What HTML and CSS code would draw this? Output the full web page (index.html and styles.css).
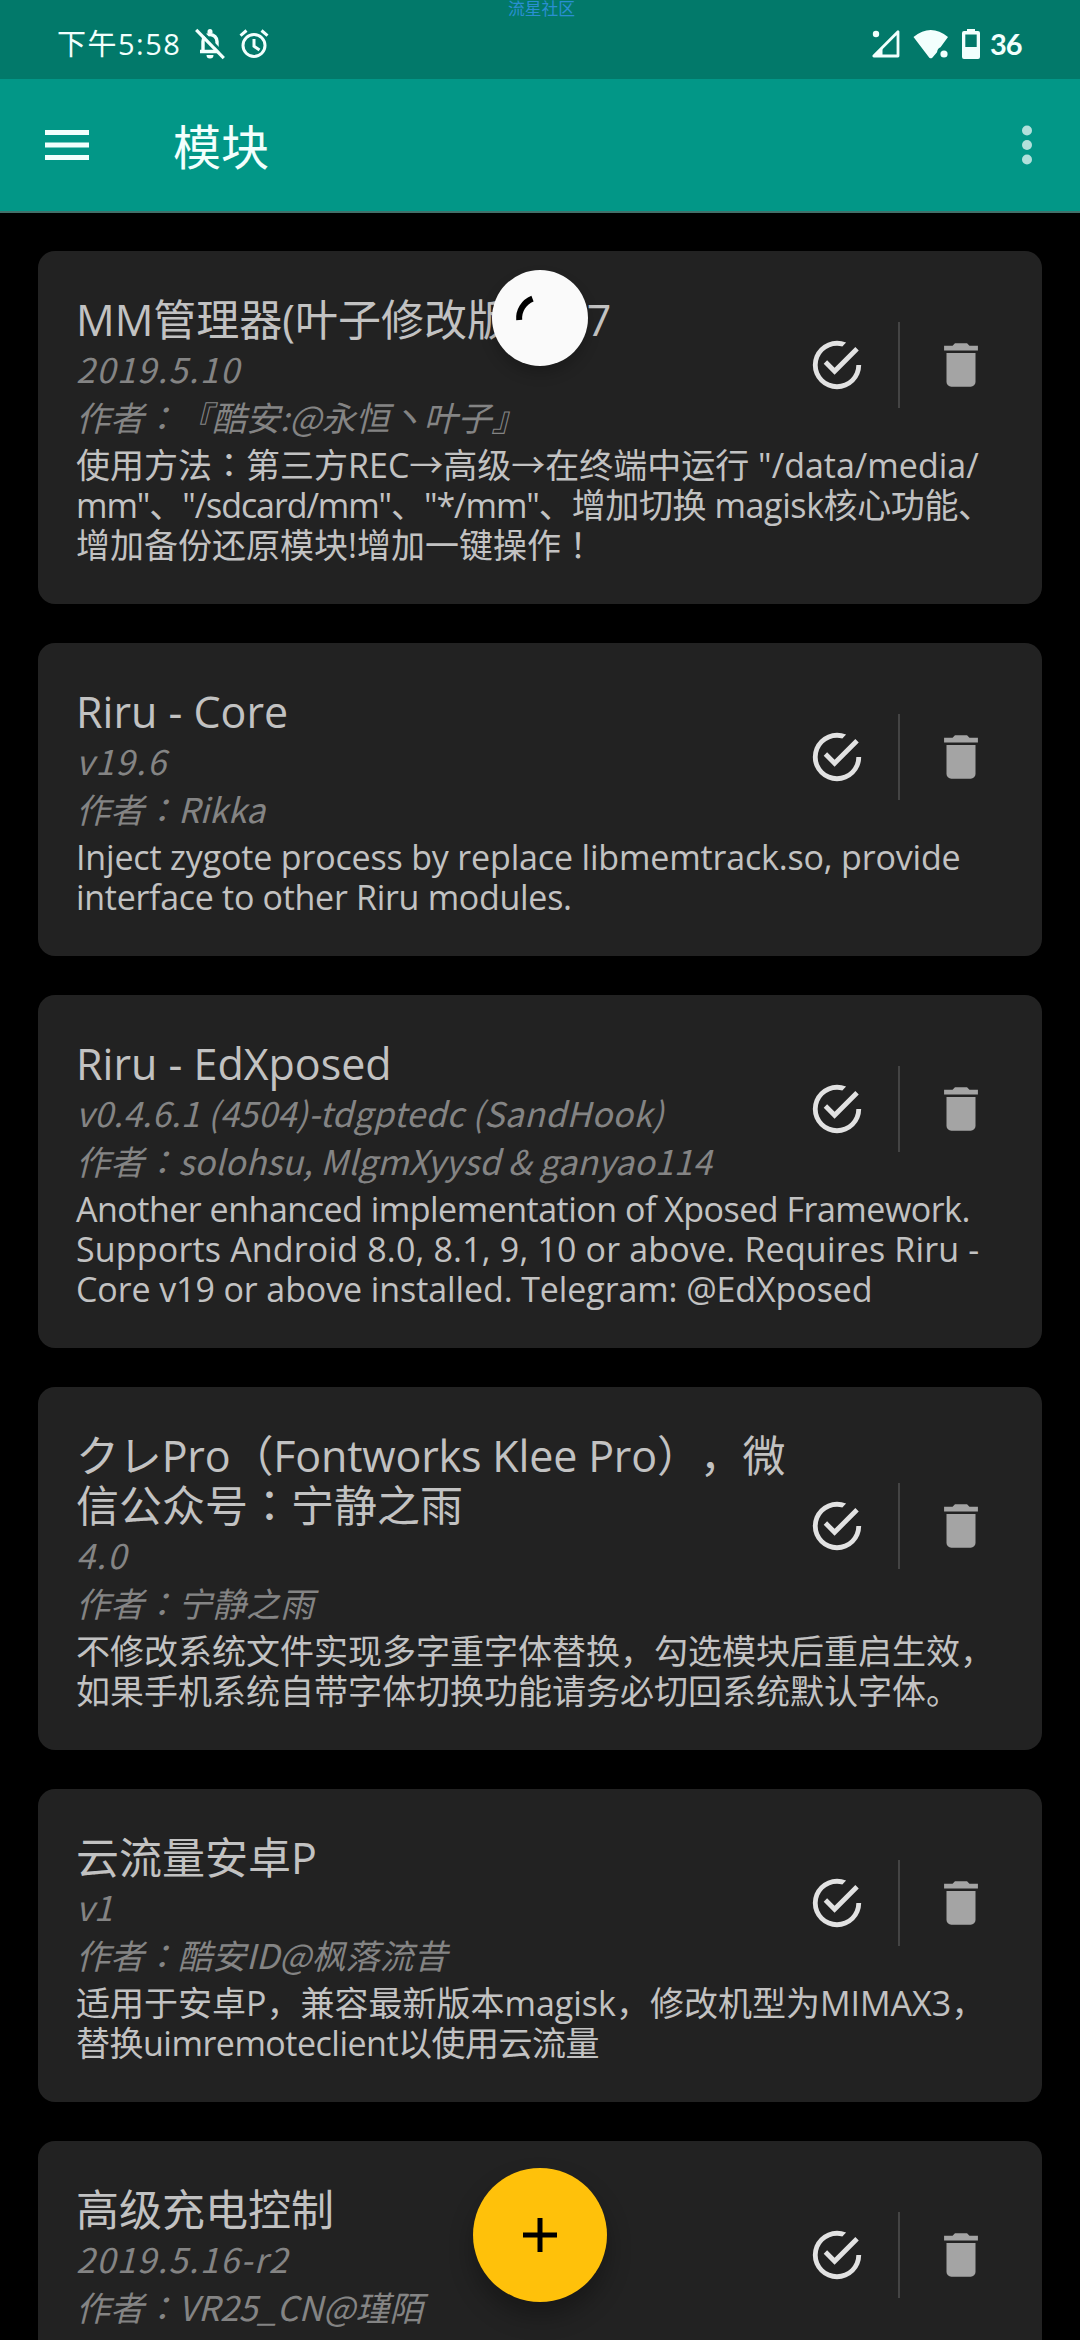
FILE: index.html
```html
<!DOCTYPE html>
<html lang="zh-CN">
<head>
<meta charset="utf-8">
<title>模块</title>
<link rel="stylesheet" href="styles.css">
</head>
<body>
<svg class="sprite" width="0" height="0" aria-hidden="true">
  <symbol id="check" viewBox="0 0 24 24"><path d="M20 12a8 8 0 0 1-8 8 8 8 0 0 1-8-8 8 8 0 0 1 8-8c.76 0 1.5.11 2.2.31l1.57-1.57A9.82 9.82 0 0 0 12 2 10 10 0 0 0 2 12a10 10 0 0 0 10 10 10 10 0 0 0 10-10M7.91 10.08 6.5 11.5 11 16 21 6l-1.41-1.42L11 13.17"/></symbol>
  <symbol id="trash" viewBox="0 0 24 24"><path d="M19 4h-3.5l-1-1h-5l-1 1H5v2h14M6 19a2 2 0 0 0 2 2h8a2 2 0 0 0 2-2V7H6v12z"/></symbol>
</svg>
<div class="screen">
  <header class="status">
    <span class="clock">下午5:58</span>
    <svg class="bell" width="30" height="32" viewBox="0 0 30 32">
      <path d="M5 23.500h20M8 23V13.500a7 7 0 0 1 14 0V23" fill="none" stroke="#f2fffd" stroke-width="3.400"/>
      <path d="M12.500 5V3.500a2.500 2.500 0 0 1 5 0V5zM11.500 27h7a3.500 3.500 0 0 1-7 0z" fill="#f2fffd"/>
      <path d="M3.500 0 31 28.500" stroke="#02796a" stroke-width="3"/>
      <path d="M1.200 1.800 28.800 30.200" stroke="#f2fffd" stroke-width="3.200"/>
    </svg>
    <svg class="alarm" width="30" height="30" viewBox="0 0 30 30" fill="none" stroke="#f2fffd" stroke-width="3">
      <circle cx="15" cy="16.500" r="11"/><path d="M15 10v7.200l5.500 3.800M1.500 6.700 7.500 1.500M28.500 6.700l-6-5.200"/>
    </svg>
    <span class="spacer"></span>
    <svg class="signal" width="29" height="30" viewBox="0 0 29 30">
      <path d="M27 2.700V27H2.800z" fill="none" stroke="#f2fffd" stroke-width="2.800" stroke-linejoin="round"/>
      <path d="M2 27.500 11.500 18v9.500z" fill="#f2fffd"/><circle cx="5" cy="5" r="3.200" fill="#f2fffd"/>
    </svg>
    <svg class="wifi" width="36" height="30" viewBox="0 0 36 30" fill="#f2fffd">
      <path d="M.5 8Q17.800-6 35 8L27.500 18.300Q24.500 19.500 24 23.200L19.300 28.700q-1.500 1.200-3 0Z"/><circle cx="31" cy="25" r="3.600"/>
    </svg>
    <svg class="battery" width="18" height="30" viewBox="0 0 18 30">
      <path fill="#f2fffd" fill-rule="evenodd" d="M5 0h8v2h3a2 2 0 0 1 2 2v24a2 2 0 0 1-2 2H2a2 2 0 0 1-2-2V4a2 2 0 0 1 2-2h3zM3.300 5.500V18h11.400V5.500z"/>
    </svg>
    <span class="percent">36</span>
  </header>
  <div class="watermark">流星社区</div>

  <nav class="toolbar">
    <svg class="menu" width="44" height="30" viewBox="0 0 44 30" fill="#f2fffd"><path d="M0 0h44v5H0zM0 12.500h44v5H0zM0 25h44v5H0z"/></svg>
    <h1>模块</h1>
    <svg class="more" width="10" height="40" viewBox="0 0 10 40" fill="#b2e0db"><circle cx="5" cy="5.500" r="5"/><circle cx="5" cy="20" r="5"/><circle cx="5" cy="34.500" r="5"/></svg>
  </nav>

  <main class="list">
    <article class="card">
      <div class="head">
        <div class="info">
          <h2>MM管理器(叶子修改版)<span class="ver">7</span></h2>
          <p class="meta ls-15">2019.5.10</p>
          <p class="meta">作者<i lang="zh-TW">：</i>『酷安:@永恒丶叶子』</p>
        </div>
        <div class="actions"><svg class="on"><use href="#check"/></svg><span class="rule"></span><svg class="del"><use href="#trash"/></svg></div>
      </div>
      <div class="desc"><p>使用方法<i lang="zh-TW">：</i>第三方REC→高级→在终端中运行 "/data/media/</p><p class="ls-n4"><span class="ls-n10">mm"、"/sdcard/mm"、"*/mm"、</span>增加切换 magisk核心功能、</p><p>增加备份还原模块!增加一键操作<i lang="zh-TW">！</i></p></div>
    </article>

    <article class="card">
      <div class="head">
        <div class="info">
          <h2>Riru - Core</h2>
          <p class="meta ls-15">v19.6</p>
          <p class="meta">作者<i lang="zh-TW">：</i>Rikka</p>
        </div>
        <div class="actions"><svg class="on"><use href="#check"/></svg><span class="rule"></span><svg class="del"><use href="#trash"/></svg></div>
      </div>
      <div class="desc"><p class="ls-n2">Inject zygote process by replace libmemtrack.so, provide</p><p class="ls-n3">interface to other Riru modules.</p></div>
    </article>

    <article class="card">
      <div class="head">
        <div class="info">
          <h2>Riru - EdXposed</h2>
          <p class="meta ls-3">v0.4.6.1 (4504)-tdgptedc (SandHook)</p>
          <p class="meta ls-1">作者<i lang="zh-TW">：</i>solohsu, MlgmXyysd &amp; ganyao114</p>
        </div>
        <div class="actions"><svg class="on"><use href="#check"/></svg><span class="rule"></span><svg class="del"><use href="#trash"/></svg></div>
      </div>
      <div class="desc"><p class="ls-n5">Another enhanced implementation of Xposed Framework.</p><p class="ls-2">Supports Android 8.0, 8.1, 9, 10 or above. Requires Riru -</p><p class="ls-n1">Core v19 or above installed. Telegram: @EdXposed</p></div>
    </article>

    <article class="card">
      <div class="head">
        <div class="info">
          <h2><span class="ls-n2">クレPro（Fontworks Klee Pro），微</span><br>信公众号<i lang="zh-TW">：</i>宁静之雨</h2>
          <p class="meta ls-15">4.0</p>
          <p class="meta">作者<i lang="zh-TW">：</i>宁静之雨</p>
        </div>
        <div class="actions"><svg class="on"><use href="#check"/></svg><span class="rule"></span><svg class="del"><use href="#trash"/></svg></div>
      </div>
      <div class="desc"><p>不修改系统文件实现多字重字体替换，勾选模块后重启生效，</p><p>如果手机系统自带字体切换功能请务必切回系统默认字体。</p></div>
    </article>

    <article class="card">
      <div class="head">
        <div class="info">
          <h2>云流量安卓P</h2>
          <p class="meta">v1</p>
          <p class="meta">作者<i lang="zh-TW">：</i>酷安ID@枫落流昔</p>
        </div>
        <div class="actions"><svg class="on"><use href="#check"/></svg><span class="rule"></span><svg class="del"><use href="#trash"/></svg></div>
      </div>
      <div class="desc"><p>适用于安卓P，兼容最新版本magisk，修改机型为MIMAX3，</p><p class="ls-n5">替换uimremoteclient以使用云流量</p></div>
    </article>

    <article class="card">
      <div class="head">
        <div class="info">
          <h2>高级充电控制</h2>
          <p class="meta ls-15">2019.5.16-r2</p>
          <p class="meta ls-1">作者<i lang="zh-TW">：</i>VR25_CN@瑾陌</p>
        </div>
        <div class="actions"><svg class="on"><use href="#check"/></svg><span class="rule"></span><svg class="del"><use href="#trash"/></svg></div>
      </div>
    </article>
  </main>

  <div class="spinner"><svg width="96" height="96" viewBox="0 0 96 96"><path d="M27.200 50A21 21 0 0 1 40.500 28.600" fill="none" stroke="#000" stroke-width="6"/></svg></div>
  <div class="fab"><svg width="34" height="34" viewBox="0 0 34 34"><path d="M14.500 0h5v14.500H34v5H19.500V34h-5V19.500H0v-5h14.500z"/></svg></div>
</div>
</body>
</html>
```
FILE: styles.css
```css
* { box-sizing: border-box; margin: 0; padding: 0; }
body { background: #000; font-family: "Open Sans", "Noto Sans CJK SC", sans-serif; text-spacing-trim: space-all; }
svg { display: block; flex: none; }
.sprite { position: absolute; }
i { font-family: "Noto Sans CJK TC", sans-serif; font-style: inherit; line-height: 0; }

.screen { position: relative; width: 1080px; height: 2340px; overflow: hidden; background: #000; }

.status { display: flex; align-items: center; height: 79px; padding: 8px 59px 0 57px; background: #02796a; color: #f2fffd; }
.clock { width: 124px; font-size: 29px; line-height: 40px; letter-spacing: 1.500px; white-space: nowrap; }
.bell { margin-left: 14px; }
.alarm { margin-left: 14px; }
.spacer { flex: 1; }
.wifi { margin-left: 13px; }
.battery { margin-left: 13px; }
.percent { width: 31px; margin-left: 10px; font: 700 29px/40px Lato, sans-serif; letter-spacing: -1px; }
.watermark { position: absolute; top: 0; left: 508px; font-size: 16.800px; line-height: 17px; color: #2a8fd2; white-space: nowrap; }

.toolbar { display: flex; align-items: center; height: 134px; padding: 0 48px 0 45px; background: #029787; border-bottom: 2px solid #42706a; }
.toolbar h1 { flex: 1; margin: 3px 0 0 84px; font-size: 48px; line-height: 60px; font-weight: 400; color: #f2fffd; }

.list { display: flex; flex-direction: column; gap: 39px; padding: 38px 38px 0; }
.card { flex: none; padding: 39px 0 39px 38px; background: #222; border-radius: 17px; color: #c2c2c2; white-space: nowrap; }
.head { display: flex; align-items: center; justify-content: space-between; padding-right: 20px; }
.info { width: 700px; padding: 5px 0 3px; }
h2 { font-size: 43px; line-height: 50px; font-weight: 400; }
.ver { margin-left: 64px; }
.meta { font-family: "Noto Sans CJK SC", sans-serif; font-style: italic; font-size: 34px; line-height: 40px; color: #848484; margin-top: 8px; }
h2 + .meta { margin-top: 4px; }
.desc { margin-top: 5px; font-size: 34px; line-height: 40px; }

.actions { display: flex; align-items: center; flex: none; }
.actions svg { width: 58px; height: 58px; margin: 0 32px; }
.on { fill: #e2e2e2; }
.del { fill: #a4a4a4; }
.rule { width: 2px; height: 86px; background: #444; }

.ls-15 { letter-spacing: 1.500px; }
.ls-3 { letter-spacing: .3px; }
.ls-2 { letter-spacing: .17px; }
.ls-1 { letter-spacing: .1px; }
.ls-n1 { letter-spacing: -.1px; }
.ls-n2 { letter-spacing: -.17px; }
.ls-n3 { letter-spacing: -.3px; }
.ls-n4 { letter-spacing: -.4px; }
.ls-n5 { letter-spacing: -.5px; }
.ls-n10 { letter-spacing: -1.080px; }

.spinner { position: absolute; left: 492px; top: 270px; width: 96px; height: 96px; border-radius: 50%; background: #fafafa; box-shadow: 0 8px 14px rgba(0, 0, 0, .2); }
.fab { position: absolute; left: 473px; top: 2168px; display: flex; align-items: center; justify-content: center; width: 134px; height: 134px; border-radius: 50%; background: #ffc10a; box-shadow: 0 14px 24px rgba(0, 0, 0, .3); }
```
